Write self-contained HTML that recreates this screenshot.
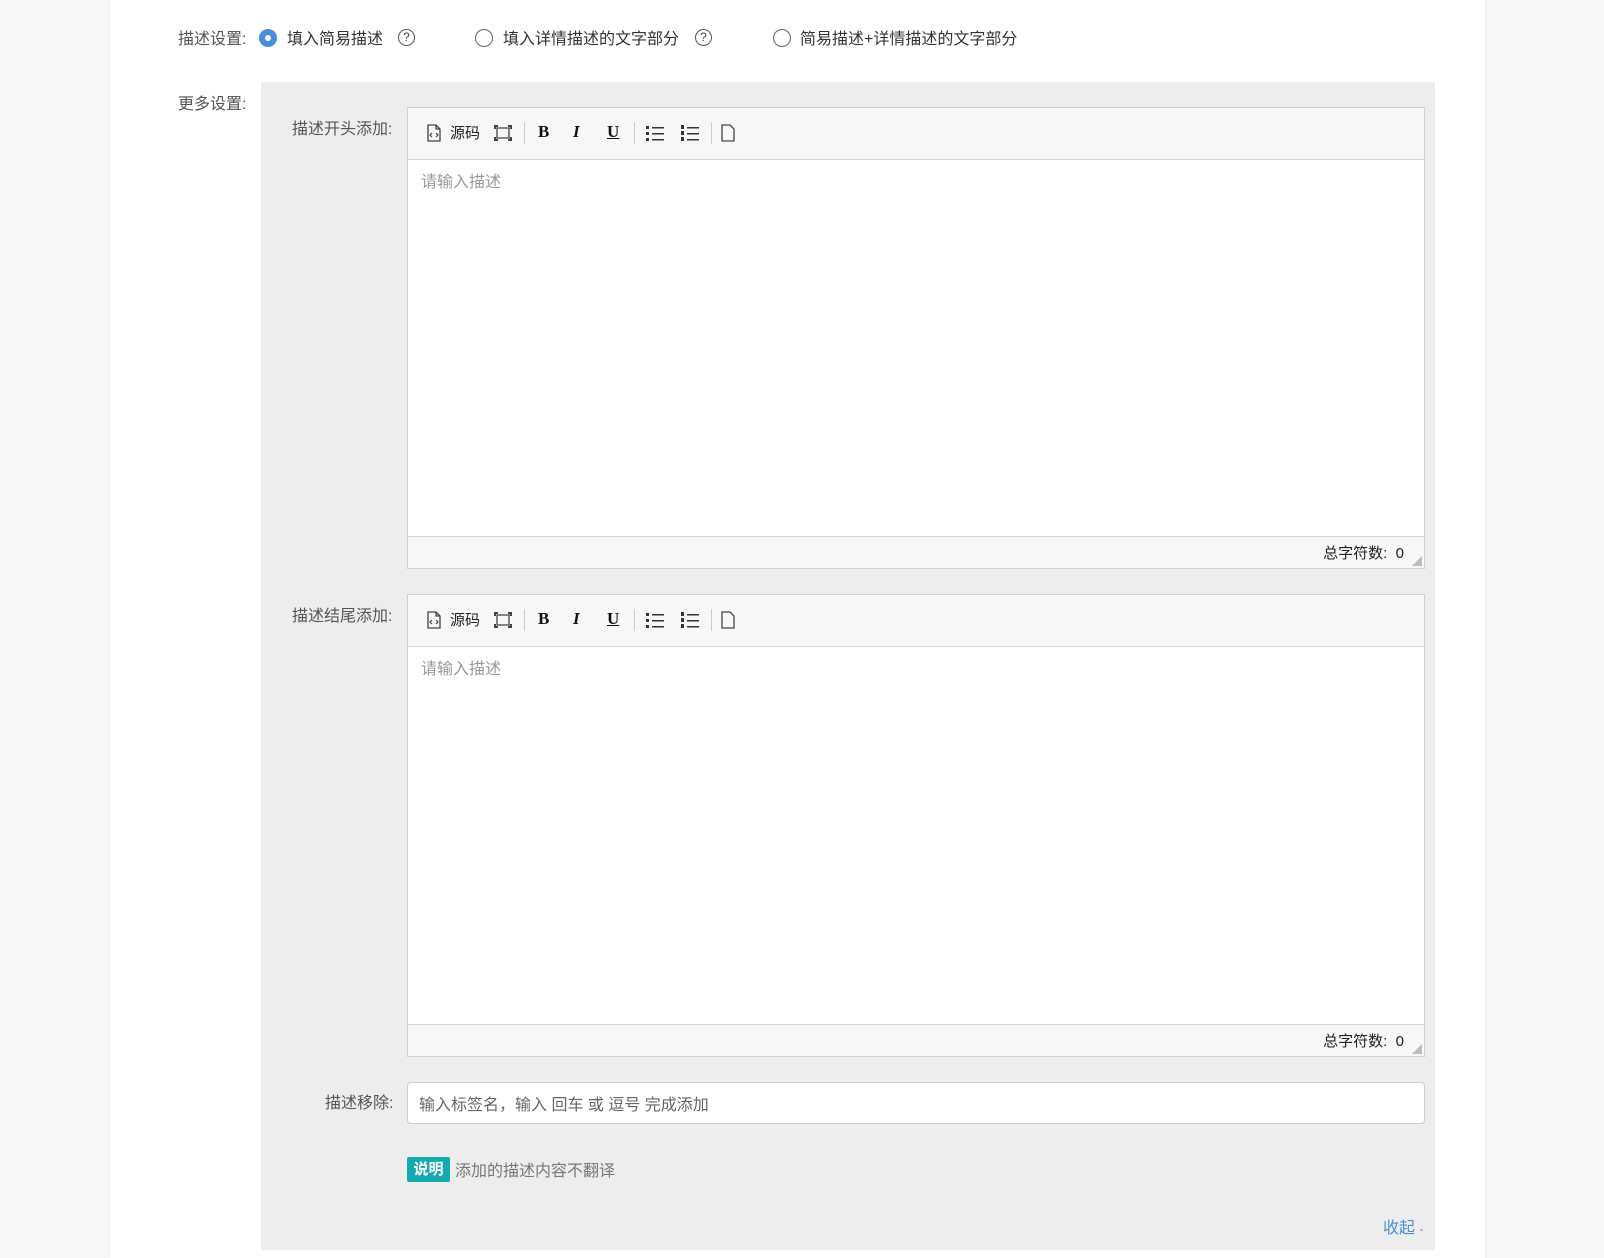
<!DOCTYPE html>
<html><head><meta charset="utf-8"><style>
*{box-sizing:border-box;margin:0;padding:0}
body{width:1604px;height:1258px;background:#f7f7f7;font-family:"Liberation Sans","Noto Sans CJK SC",sans-serif;font-size:16px;color:#444;position:relative;overflow:hidden}
.card{position:absolute;left:110px;top:0;width:1375px;height:1258px;background:#fff;box-shadow:0 0 2px #e6e6e6}
.a{position:absolute;white-space:nowrap}
.lbl{color:#555;font-size:16px}
.radio{position:absolute;width:18px;height:18px;border:1.5px solid #666;border-radius:50%}
.radio.on{border:none;background:#4a8fd6}
.radio.on:after{content:"";position:absolute;left:6px;top:6px;width:6px;height:6px;border-radius:50%;background:#fff}
.q{position:absolute;width:17px;height:17px;border:1.3px solid #555;border-radius:50%;font-size:12px;text-align:center;line-height:15px;color:#444}
.panel{position:absolute;left:261px;top:82px;width:1174px;height:1168px;background:#ededed}
.ed{position:absolute;left:407px;width:1018px;border:1px solid #d0d0d0;background:#fff}
.tb{height:52px;background:#f7f7f7;border-bottom:1px solid #d5d5d5;position:relative}
.ft{position:absolute;left:0;right:0;bottom:0;height:32px;background:#f7f7f7;border-top:1px solid #d5d5d5;font-size:15px;color:#222}
.ph{position:absolute;left:13px;top:60px;color:#999;font-size:16px}
.sep{position:absolute;top:14px;width:1px;height:22px;background:#ccc}
.ic{position:absolute;top:14px;font-family:"Liberation Serif",serif;font-weight:bold;font-size:17px;color:#111}
</style></head><body>
<div class="card"></div>
<div class="a lbl" style="left:178px;top:25px">描述设置:</div>
<div class="radio on" style="left:259px;top:29px"></div>
<div class="a" style="left:287px;top:25px;color:#333">填入简易描述</div>
<div class="q" style="left:398px;top:29px">?</div>
<div class="radio" style="left:475px;top:29px"></div>
<div class="a" style="left:503px;top:25px;color:#333">填入详情描述的文字部分</div>
<div class="q" style="left:695px;top:29px">?</div>
<div class="radio" style="left:773px;top:29px"></div>
<div class="a" style="left:800px;top:25px;color:#333">简易描述+详情描述的文字部分</div>
<div class="a lbl" style="left:178px;top:90px">更多设置:</div>
<div class="panel"></div>

<div class="a lbl" style="left:292px;top:115px">描述开头添加:</div>
<div class="ed" style="top:107px;height:462px">
 <div class="tb">
  <svg class="a" style="left:19px;top:16px" width="14" height="18" viewBox="0 0 14 18"><path d="M1 1h8l4 4v12H1z M9 1v4h4" fill="none" stroke="#444" stroke-width="1.3"/><path d="M5 9l-2 2 2 2M9 9l2 2-2 2" fill="none" stroke="#444" stroke-width="1.2"/></svg>
  <div class="a" style="left:42px;top:14px;font-size:15px;color:#222">源码</div>
  <svg class="a" style="left:86px;top:17px" width="18" height="16" viewBox="0 0 18 16"><path d="M3 3h12v10H3z" fill="none" stroke="#444" stroke-width="1.3"/><path d="M0 0h4v2H2v2H0zM18 0h-4v2h2v2h2zM0 16h4v-2H2v-2H0zM18 16h-4v-2h2v-2h2z" fill="#444"/></svg>
  <div class="sep" style="left:116px"></div>
  <div class="ic" style="left:130px">B</div>
  <div class="ic" style="left:165px;font-style:italic">I</div>
  <div class="ic" style="left:199px;text-decoration:underline">U</div>
  <div class="sep" style="left:226px"></div>
  <svg class="a" style="left:238px;top:16px" width="18" height="18" viewBox="0 0 18 18"><g fill="#333"><rect x="0" y="2" width="3" height="3"/><rect x="0" y="8" width="3" height="3"/><rect x="0" y="14" width="3" height="3"/><rect x="6" y="3" width="12" height="1.5"/><rect x="6" y="9" width="12" height="1.5"/><rect x="6" y="15" width="12" height="1.5"/></g></svg>
  <svg class="a" style="left:273px;top:16px" width="18" height="18" viewBox="0 0 18 18"><g fill="#333"><rect x="0" y="1" width="3" height="4"/><rect x="0" y="7" width="3" height="4"/><rect x="0" y="13" width="3" height="4"/><rect x="6" y="3" width="12" height="1.5"/><rect x="6" y="9" width="12" height="1.5"/><rect x="6" y="15" width="12" height="1.5"/></g></svg>
  <div class="sep" style="left:303px"></div>
  <svg class="a" style="left:313px;top:16px" width="14" height="18" viewBox="0 0 14 18"><path d="M1 1h8l4 4v12H1z" fill="none" stroke="#444" stroke-width="1.3"/></svg>
 </div>
 <div class="ph">请输入描述</div>
 <div class="ft"><div class="a" style="right:20px;top:5px">总字符数:&nbsp;&nbsp;0</div><svg class="a" style="right:2px;bottom:2px" width="10" height="10"><path d="M10 0V10H0z" fill="#bbb"/></svg></div>
</div>

<div class="a lbl" style="left:292px;top:602px">描述结尾添加:</div>
<div class="ed" style="top:594px;height:463px">
 <div class="tb">
  <svg class="a" style="left:19px;top:16px" width="14" height="18" viewBox="0 0 14 18"><path d="M1 1h8l4 4v12H1z M9 1v4h4" fill="none" stroke="#444" stroke-width="1.3"/><path d="M5 9l-2 2 2 2M9 9l2 2-2 2" fill="none" stroke="#444" stroke-width="1.2"/></svg>
  <div class="a" style="left:42px;top:14px;font-size:15px;color:#222">源码</div>
  <svg class="a" style="left:86px;top:17px" width="18" height="16" viewBox="0 0 18 16"><path d="M3 3h12v10H3z" fill="none" stroke="#444" stroke-width="1.3"/><path d="M0 0h4v2H2v2H0zM18 0h-4v2h2v2h2zM0 16h4v-2H2v-2H0zM18 16h-4v-2h2v-2h2z" fill="#444"/></svg>
  <div class="sep" style="left:116px"></div>
  <div class="ic" style="left:130px">B</div>
  <div class="ic" style="left:165px;font-style:italic">I</div>
  <div class="ic" style="left:199px;text-decoration:underline">U</div>
  <div class="sep" style="left:226px"></div>
  <svg class="a" style="left:238px;top:16px" width="18" height="18" viewBox="0 0 18 18"><g fill="#333"><rect x="0" y="2" width="3" height="3"/><rect x="0" y="8" width="3" height="3"/><rect x="0" y="14" width="3" height="3"/><rect x="6" y="3" width="12" height="1.5"/><rect x="6" y="9" width="12" height="1.5"/><rect x="6" y="15" width="12" height="1.5"/></g></svg>
  <svg class="a" style="left:273px;top:16px" width="18" height="18" viewBox="0 0 18 18"><g fill="#333"><rect x="0" y="1" width="3" height="4"/><rect x="0" y="7" width="3" height="4"/><rect x="0" y="13" width="3" height="4"/><rect x="6" y="3" width="12" height="1.5"/><rect x="6" y="9" width="12" height="1.5"/><rect x="6" y="15" width="12" height="1.5"/></g></svg>
  <div class="sep" style="left:303px"></div>
  <svg class="a" style="left:313px;top:16px" width="14" height="18" viewBox="0 0 14 18"><path d="M1 1h8l4 4v12H1z" fill="none" stroke="#444" stroke-width="1.3"/></svg>
 </div>
 <div class="ph">请输入描述</div>
 <div class="ft"><div class="a" style="right:20px;top:5px">总字符数:&nbsp;&nbsp;0</div><svg class="a" style="right:2px;bottom:2px" width="10" height="10"><path d="M10 0V10H0z" fill="#bbb"/></svg></div>
</div>

<div class="a lbl" style="left:325px;top:1089px">描述移除:</div>
<div class="a" style="left:407px;top:1082px;width:1018px;height:42px;background:#fff;border:1px solid #ccc;border-radius:4px"></div>
<div class="a" style="left:419px;top:1091px;color:#666;font-size:16px">输入标签名，输入 回车 或 逗号 完成添加</div>
<div class="a" style="left:407px;top:1157px;width:43px;height:25px;background:#16a9b0;border-radius:2px;color:#fff;font-size:15px;font-weight:bold;text-align:center;line-height:25px">说明</div>
<div class="a" style="left:455px;top:1157px;color:#777;font-size:16px">添加的描述内容不翻译</div>
<div class="a" style="left:1383px;top:1214px;color:#4a8fd6;font-size:16px">收起 <span style="font-size:12px">-</span></div>
</body></html>
